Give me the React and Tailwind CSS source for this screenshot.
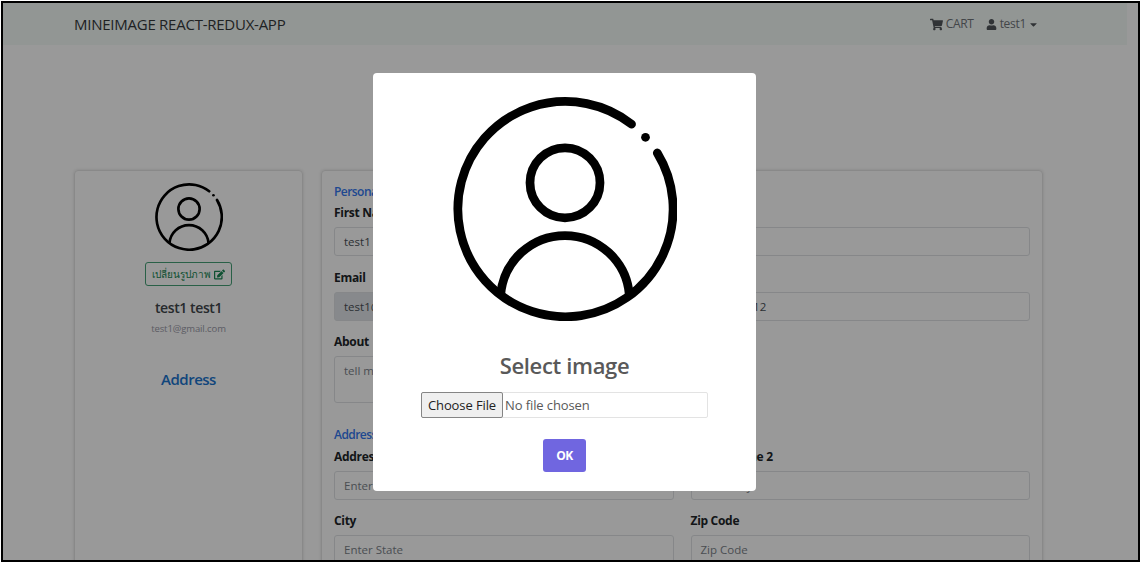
import { FaShoppingCart, FaUser, FaCaretDown, FaEdit } from "react-icons/fa";

function Avatar({ className }) {
  return (
    <svg viewBox="0 0 512 512" className={className} fill="none" stroke="#000" strokeWidth="20" strokeLinecap="round">
      <path d="M408 62A246 246 0 1 0 467 128" />
      <circle cx="256" cy="196" r="80" />
      <path d="M109 452A147.5 147.5 0 0 1 403 452" strokeLinecap="butt" />
      <circle cx="440" cy="92" r="10" fill="#000" stroke="none" />
    </svg>
  );
}

function Field({ label, value, placeholder, muted, tall }) {
  return (
    <div className="flex flex-1 flex-col gap-[3px]">
      <div className="h-[22px] text-[12px] leading-[22px] font-bold tracking-[-0.3px] text-[#212529]">{label}</div>
      <div
        className={`rounded-[3px] border border-[#dfe2e5] px-[9px] text-[11.5px] leading-[27px] ${tall ? "h-[47px]" : "h-[29px]"} ${muted ? "bg-[#e2e5e9]" : ""} ${value ? "text-[#495057]" : "text-[#7c838a]"}`}
      >
        {value || placeholder}
      </div>
    </div>
  );
}

function Heading({ children }) {
  return <div className="h-[22px] text-[12px] leading-[22px] font-semibold tracking-[-0.55px] text-[#3478f0]">{children}</div>;
}

export default function App() {
  return (
    <div className="h-[563px] w-[1141px] overflow-hidden bg-white p-px font-['Open_Sans','Noto_Sans',sans-serif]">
      <div className="relative h-[561px] w-[1139px] overflow-hidden border-2 border-black bg-white">
        <nav className="flex h-[42px] w-[1124px] items-center justify-between bg-[#f4faf7] pr-[88px] pl-[71px]">
          <span className="text-[15px] tracking-[-0.25px] text-[#34383b]">MINEIMAGE REACT-REDUX-APP</span>
          <div className="flex items-center text-[12px] text-[#70757a]">
            <FaShoppingCart className="mr-[3px] size-[13px] text-[#50555a]" />
            <span className="tracking-[-0.3px]">CART</span>
            <FaUser className="mr-[3px] ml-[12px] size-[11px] text-[#50555a]" />
            <span className="tracking-[-0.3px]">test1</span>
            <FaCaretDown className="ml-[2px] size-[11px] text-[#50555a]" />
          </div>
        </nav>

        <main className="mt-[125px] ml-[71px] flex gap-[18px]">
          <aside className="flex h-[500px] w-[229px] flex-col items-center rounded-[4px] border border-[#e4e4e4] pt-[12px] shadow-[0_0_3px_rgba(0,0,0,0.15)]">
            <Avatar className="size-[68px]" />
            <button className="mt-[11px] flex h-[24px] w-[87px] items-center justify-center gap-[3px] rounded-[3px] border border-[#45a077] text-[10px] text-[#198754]">
              <span>เปลี่ยนรูปภาพ</span>
              <FaEdit className="size-[11px]" />
            </button>
            <div className="mt-[11px] text-[14px] leading-[22px] font-semibold tracking-[-0.4px] text-[#41464b]">test1 test1</div>
            <div className="mt-[2px] text-[9.5px] leading-[16px] tracking-[-0.1px] text-[#9a9aa8]">test1@gmail.com</div>
            <div className="mt-[31px] text-[15px] leading-[22px] font-semibold tracking-[-0.5px] text-[#1c75cf]">Address</div>
          </aside>

          <section className="flex h-[500px] w-[722px] flex-col rounded-[4px] border border-[#e4e4e4] px-[12px] pt-[10px] shadow-[0_0_3px_rgba(0,0,0,0.15)]">
            <Heading>Personal Details</Heading>
            <div className="-mt-px flex flex-col gap-[10.5px]">
              <div className="flex gap-[17px]">
                <Field label="First Name" value="test1" />
                <Field label="Last Name" value="test1" />
              </div>
              <div className="flex gap-[17px]">
                <Field label="Email" value="test1@gmail.com" muted />
                <Field label="Phone" value="0891234512" />
              </div>
              <div className="flex gap-[17px]">
                <Field label="About" placeholder="tell me about yourself" tall />
                <div className="flex-1" />
              </div>
            </div>
            <div className="mt-[21px]">
              <Heading>Address</Heading>
            </div>
            <div className="flex flex-col gap-[10px]">
              <div className="flex gap-[17px]">
                <Field label="Address Line 1" placeholder="Enter Street" />
                <Field label="Address Line 2" placeholder="Enter City" />
              </div>
              <div className="flex gap-[17px]">
                <Field label="City" placeholder="Enter State" />
                <Field label="Zip Code" placeholder="Zip Code" />
              </div>
            </div>
          </section>
        </main>

        <div className="absolute inset-0 bg-black/40">
          <div className="mt-[70px] ml-[370px] flex h-[418px] w-[383px] flex-col items-center rounded-[4px] bg-white pt-[24px]">
            <Avatar className="size-[224px]" />
            <h2 className="mt-[28px] text-[22px] leading-[32px] font-semibold tracking-[-0.35px] text-[#595959]">Select image</h2>
            <div className="mt-[11px] flex h-[26px] w-[287px] items-center rounded-[2px] border border-[#e3e3e3] text-[13px] text-[#595959]">
              <button className="-ml-px h-[26px] w-[82px] shrink-0 rounded-[2px] border border-[#858585] bg-[#efefef] text-[13px] leading-[24px] tracking-[-0.1px] whitespace-nowrap text-[#222]">Choose File</button>
              <span className="ml-[2px] pt-px tracking-[-0.1px]">No file chosen</span>
            </div>
            <button className="mt-[21px] h-[33px] w-[43px] rounded-[3px] bg-[#7066e0] pt-px text-[12px] font-bold tracking-[-0.4px] text-white">OK</button>
          </div>
        </div>
      </div>
    </div>
  );
}
